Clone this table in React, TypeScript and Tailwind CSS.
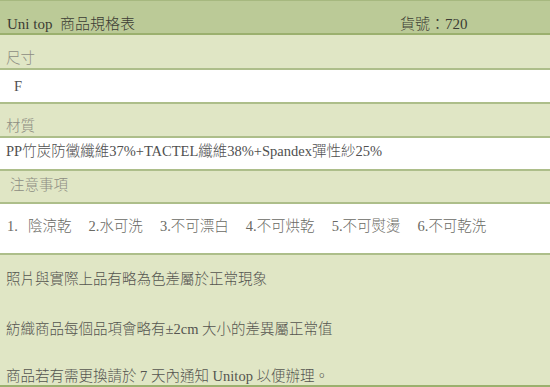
import React from "react";

const font = {
  fontFamily: '"Liberation Serif", "Noto Sans CJK TC", serif',
};

const care = ["陰涼乾", "2.水可洗", "3.不可漂白", "4.不可烘乾", "5.不可熨燙", "6.不可乾洗"];

export default function App() {
  return (
    <div
      className="w-[550px] h-[387px] bg-[#e0e6c5] text-[14.5px] leading-[20px] font-light overflow-hidden"
      style={font}
    >
      {/* title bar */}
      <div className="h-[35px] border-t border-b-2 border-t-[#a6b87f] border-b-[#9bb06e] bg-[#bbca97] pt-[13px] pl-[7px] flex text-[15px] text-[#3c3c34]">
        <span className="w-[393px] whitespace-pre">Uni top  商品規格表</span>
        <span>貨號：720</span>
      </div>

      {/* size */}
      <div className="h-[35px] border-b-2 border-[#adbe8a] pt-[13px] pl-[6px] text-[#8d8d82]">尺寸</div>
      <div className="h-[34px] border-b-2 border-[#adbe8a] bg-white pt-[6px] pl-[14px] text-[#505050]">F</div>

      {/* material */}
      <div className="h-[34px] border-b-2 border-[#adbe8a] pt-[12px] pl-[6px] text-[#8d8d82]">材質</div>
      <div className="h-[33px] border-b-2 border-[#adbe8a] bg-white pt-[3px] pl-[6px] text-[#505050]">
        PP竹炭防黴纖維37%+TACTEL纖維38%+Spandex彈性紗25%
      </div>

      {/* care notes */}
      <div className="h-[33px] border-b-2 border-[#adbe8a] pt-[4px] pl-[10px] text-[#8d8d82]">注意事項</div>
      <div className="h-[51px] border-b-2 border-[#adbe8a] bg-white pt-[12px] pl-[7px] flex text-[#6a6a64]">
        <span className="w-[21px]">1.</span>
        <div className="flex gap-[17px]">
          {care.map((c) => (
            <span key={c}>{c}</span>
          ))}
        </div>
      </div>

      {/* remarks */}
      <div className="h-[132px] border-b-2 border-[#9bb06e] pl-[6px] text-[#555550]">
        <p className="pt-[14px]">照片與實際上品有略為色差屬於正常現象</p>
        <p className="pt-[30px]">紡織商品每個品項會略有±2cm 大小的差異屬正常值</p>
        <p className="pt-[27px]">商品若有需更換請於 7 天內通知 Unitop 以便辦理。</p>
      </div>
    </div>
  );
}
